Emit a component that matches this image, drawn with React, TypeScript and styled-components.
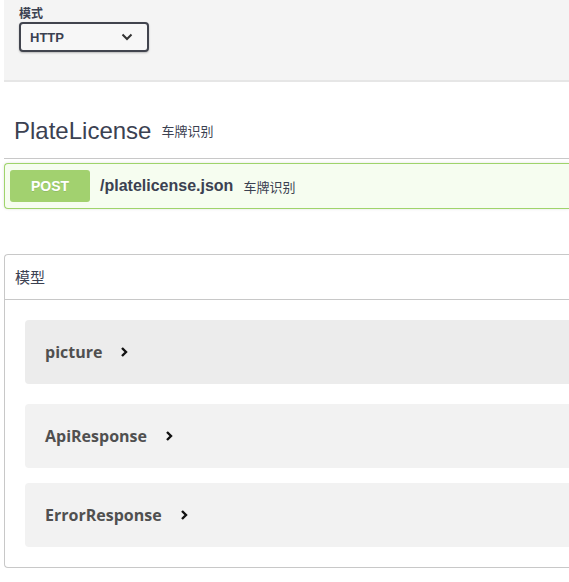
import React from "react";
import styled, { createGlobalStyle } from "styled-components";

const GlobalStyle = createGlobalStyle`
  html, body {
    margin: 0;
    padding: 0;
    background: #fff;
    overflow: hidden;
  }
  body {
    font-family: "Liberation Sans", Arial, "Noto Sans CJK SC", sans-serif;
    color: #3b4151;
  }
`;

const palette = {
  text: "#3b4151",
  post: "#a2d16f",
  postBorder: "#9fd46b",
  postBg: "#f6fdf0",
  line: "#c8c8c8",
};

const Page = styled.div`
  width: 100%;
  padding-left: 4px;
  box-sizing: border-box;
`;

const SchemeBar = styled.section`
  height: 82px;
  background: #f4f4f4;
  border-bottom: 2px solid #e6e6e6;
  padding: 6px 0 0 15px;
  box-sizing: border-box;
`;

const SchemeLabel = styled.label`
  display: block;
  font-family: "Noto Sans CJK SC", sans-serif;
  font-size: 12px;
  font-weight: 700;
  line-height: 14px;
  color: ${palette.text};
  margin-bottom: 2px;
`;

const Select = styled.div`
  width: 130px;
  height: 30px;
  box-sizing: border-box;
  border: 2px solid #41444e;
  border-radius: 4px;
  background: #f7f7f7;
  box-shadow: 0 1px 2px rgba(0, 0, 0, 0.25);
  display: flex;
  align-items: center;
  justify-content: space-between;
  padding: 0 14px 0 9px;
  font-size: 13px;
  font-weight: 700;
  color: ${palette.text};
`;

const Tag = styled.div`
  padding-top: 34px;
`;

const TagTitle = styled.h3`
  margin: 0;
  box-sizing: border-box;
  height: 43px;
  padding: 0 10px 13px;
  display: flex;
  align-items: center;
  gap: 10px;
  border-bottom: 1px solid ${palette.line};
  font-size: 24px;
  font-weight: 400;
  color: ${palette.text};
`;

const TagDesc = styled.small`
  font-family: "Noto Sans CJK SC", sans-serif;
  font-size: 13px;
  color: ${palette.text};
`;

const OpBlock = styled.div`
  margin-top: 4px;
  border: 1px solid ${palette.postBorder};
  border-right: none;
  background: ${palette.postBg};
  border-radius: 4px 0 0 4px;
  padding: 6px 5px;
  display: flex;
  align-items: center;
  box-shadow: 0 0 3px rgba(0, 0, 0, 0.12);
`;

const Method = styled.span`
  width: 80px;
  height: 32px;
  border-radius: 3px;
  background: ${palette.post};
  color: #fff;
  font-size: 14px;
  font-weight: 700;
  display: flex;
  align-items: center;
  justify-content: center;
  text-shadow: 0 1px 0 rgba(0, 0, 0, 0.1);
`;

const Path = styled.span`
  margin-left: 10px;
  font-size: 16px;
  font-weight: 700;
  color: ${palette.text};
`;

const Summary = styled.span`
  margin-left: 10px;
  font-family: "Noto Sans CJK SC", sans-serif;
  font-size: 13px;
  color: ${palette.text};
`;

const Models = styled.section`
  margin-top: 45px;
  border: 1px solid ${palette.line};
  border-right: none;
  border-radius: 4px 0 0 4px;
  padding-bottom: 5px;
`;

const ModelsHeader = styled.h4`
  margin: 0;
  height: 45px;
  padding: 0 10px 2px;
  box-sizing: border-box;
  display: flex;
  align-items: center;
  border-bottom: 1px solid ${palette.line};
  font-family: "Noto Sans CJK SC", sans-serif;
  font-size: 15px;
  font-weight: 400;
  color: ${palette.text};
`;

const ModelList = styled.div`
  padding-top: 20px;
`;

const ModelItem = styled.div<{ $hover?: boolean }>`
  margin: 0 0 ${(p) => (p.$hover ? 20 : 15)}px 20px;
  height: 64px;
  border-radius: 4px 0 0 4px;
  background: ${(p) => (p.$hover ? "#ececec" : "#f2f2f2")};
  display: flex;
  align-items: center;
  padding-left: 20px;
  gap: 16px;
`;

const ModelName = styled.span`
  font-family: "Open Sans", sans-serif;
  font-size: 16px;
  font-weight: 700;
  color: #505050;
`;

const Chevron = () => (
  <svg width="12" height="12" viewBox="0 0 12 12" fill="none">
    <path d="M4 2 L8 6 L4 10" stroke="#111" strokeWidth="2.4" />
  </svg>
);

const ChevronDown = () => (
  <svg width="12" height="8" viewBox="0 0 12 8" fill="none">
    <path d="M1.5 1.5 L6 6 L10.5 1.5" stroke="#333" strokeWidth="2" />
  </svg>
);

const models = [
  { name: "picture", hover: true },
  { name: "ApiResponse" },
  { name: "ErrorResponse" },
];

export default function App() {
  return (
    <>
      <GlobalStyle />
      <Page>
        <SchemeBar>
          <SchemeLabel>模式</SchemeLabel>
          <Select>
            <span>HTTP</span>
            <ChevronDown />
          </Select>
        </SchemeBar>
        <Tag>
          <TagTitle>
            PlateLicense
            <TagDesc>车牌识别</TagDesc>
          </TagTitle>
          <OpBlock>
            <Method>POST</Method>
            <Path>/platelicense.json</Path>
            <Summary>车牌识别</Summary>
          </OpBlock>
        </Tag>
        <Models>
          <ModelsHeader>模型</ModelsHeader>
          <ModelList>
            {models.map((m) => (
              <ModelItem key={m.name} $hover={m.hover}>
                <ModelName>{m.name}</ModelName>
                <Chevron />
              </ModelItem>
            ))}
          </ModelList>
        </Models>
      </Page>
    </>
  );
}
